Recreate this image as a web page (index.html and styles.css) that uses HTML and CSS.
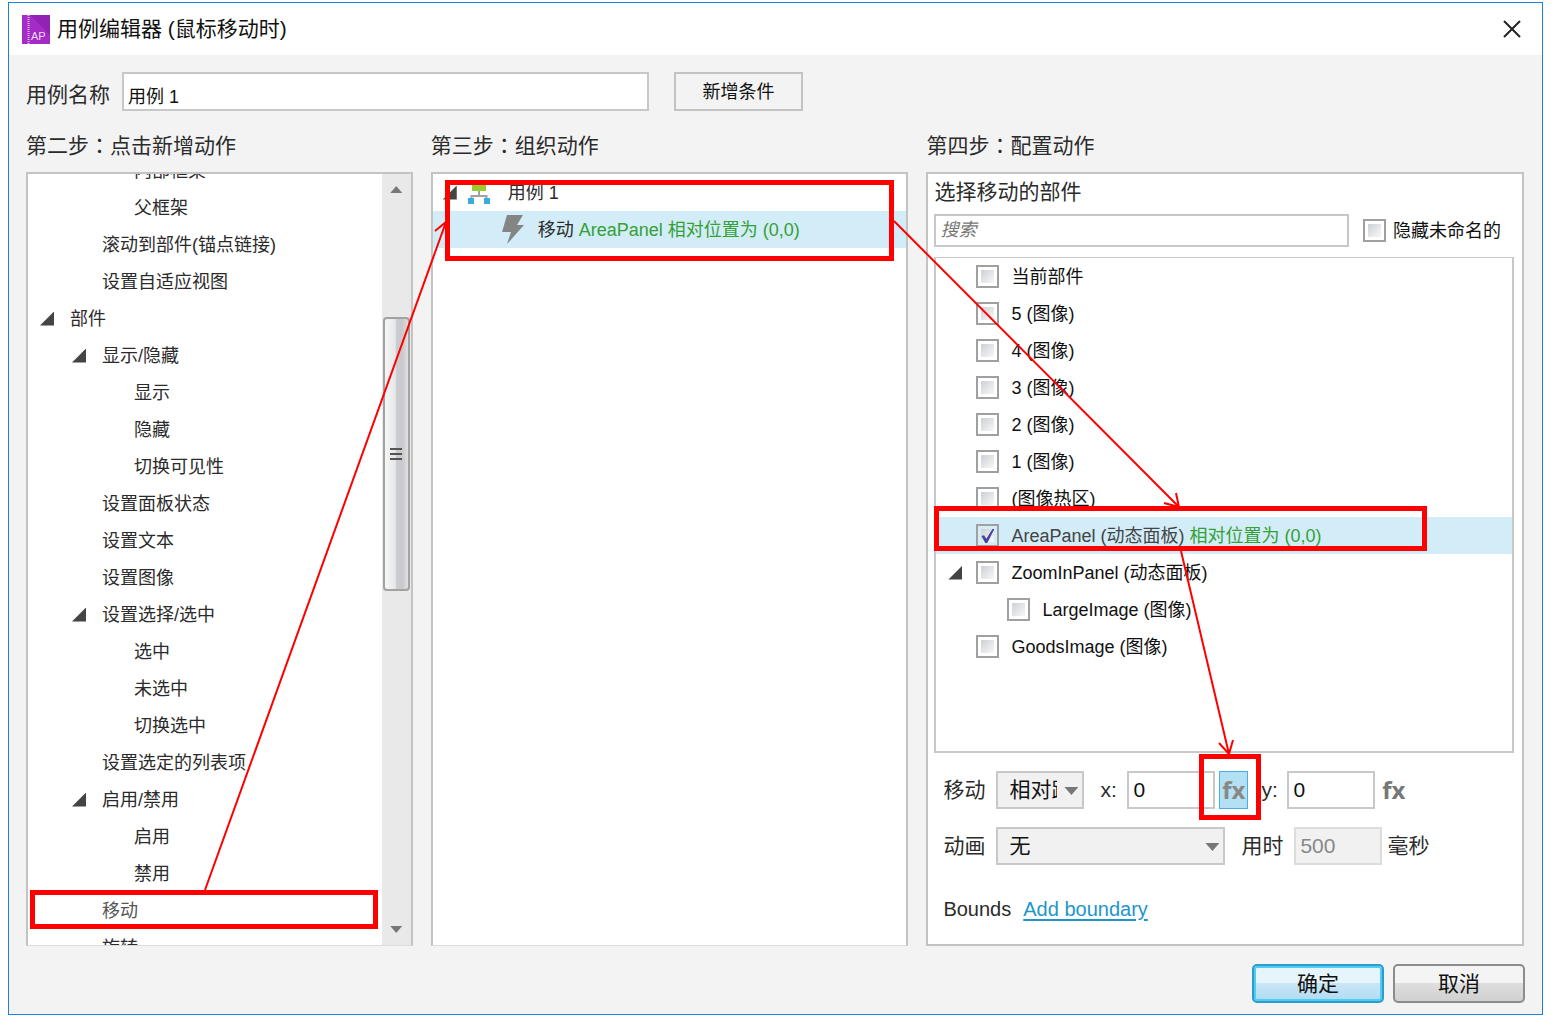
FILE: index.html
```html
<!DOCTYPE html>
<html lang="zh-CN">
<head>
  <meta charset="UTF-8">
  <meta name="viewport" content="width=device-width, initial-scale=1.0">
  <title>用例编辑器</title>
  <link rel="stylesheet" href="styles.css">
</head>
<body>
  <div class="dialog">
    <header class="titlebar">
      <svg class="logo" viewBox="0 0 28 29" aria-hidden="true">
        <rect width="28" height="29" fill="#a42bc6"/>
        <path d="M8 0h20v20z" fill="#9222b4"/>
        <path d="M6.500 0v29" stroke="#e3b5ee" stroke-width="2" stroke-dasharray="1 1"/>
        <text x="9" y="25" font-size="11" fill="#f3dcf8">AP</text>
      </svg>
      <h1>用例编辑器 (鼠标移动时)</h1>
      <button class="close" aria-label="关闭">
        <svg viewBox="0 0 18 18"><path d="M1 1L17 17M17 1L1 17" stroke="#222" stroke-width="2"/></svg>
      </button>
    </header>

    <div class="name-row">
      <label for="caseName">用例名称</label>
      <input type="text" id="caseName" value="用例 1">
      <button class="add-condition">新增条件</button>
    </div>

    <main class="columns">
      <section class="column">
        <h2>第二步<span class="colon" lang="zh-TW">：</span>点击新增动作</h2>
        <div class="panel actions">
          <ul class="tree scrolled">
            <li class="level3">内部框架</li>
            <li class="level3">父框架</li>
            <li class="level2">滚动到部件(锚点链接)</li>
            <li class="level2">设置自适应视图</li>
            <li class="level1 branch"><span class="arrow"></span>部件</li>
            <li class="level2 branch"><span class="arrow"></span>显示/隐藏</li>
            <li class="level3">显示</li>
            <li class="level3">隐藏</li>
            <li class="level3">切换可见性</li>
            <li class="level2">设置面板状态</li>
            <li class="level2">设置文本</li>
            <li class="level2">设置图像</li>
            <li class="level2 branch"><span class="arrow"></span>设置选择/选中</li>
            <li class="level3">选中</li>
            <li class="level3">未选中</li>
            <li class="level3">切换选中</li>
            <li class="level2">设置选定的列表项</li>
            <li class="level2 branch"><span class="arrow"></span>启用/禁用</li>
            <li class="level3">启用</li>
            <li class="level3">禁用</li>
            <li class="level2 current">移动</li>
            <li class="level2">旋转</li>
          </ul>
          <div class="scrollbar">
            <span class="scroll-up"></span>
            <div class="track">
              <div class="thumb"><i></i><i></i><i></i></div>
            </div>
            <span class="scroll-down"></span>
          </div>
        </div>
      </section>

      <section class="column">
        <h2>第三步<span class="colon" lang="zh-TW">：</span>组织动作</h2>
        <div class="panel">
          <ul class="tree">
            <li class="case">
              <span class="arrow"></span>
              <svg class="case-icon" viewBox="0 0 22 24" aria-hidden="true">
                <path d="M4 2h14v8H4z" fill="#97cc2c"/>
                <path d="M11 10v5M3.500 19v-4h15v4" fill="none" stroke="#a0a0a0" stroke-width="2"/>
                <path d="M0 17h6v6H0zM16 17h6v6h-6z" fill="#3aabe0"/>
              </svg>
              用例 1
            </li>
            <li class="action selected">
              <svg class="bolt" viewBox="0 0 22 29" aria-hidden="true">
                <path d="M5 0h16l-6 10h7L5 29l4-12H0z" fill="#858585"/>
              </svg>
              <span>移动 <span class="green">AreaPanel 相对位置为 (0,0)</span></span>
            </li>
          </ul>
        </div>
      </section>

      <section class="column">
        <h2>第四步<span class="colon" lang="zh-TW">：</span>配置动作</h2>
        <div class="panel config">
          <h3>选择移动的部件</h3>
          <div class="search-row">
            <input type="text" class="search" placeholder="搜索" aria-label="搜索">
            <label><input type="checkbox">隐藏未命名的</label>
          </div>
          <ul class="tree widgets">
            <li><label><input type="checkbox">当前部件</label></li>
            <li><label><input type="checkbox">5 (图像)</label></li>
            <li><label><input type="checkbox">4 (图像)</label></li>
            <li><label><input type="checkbox">3 (图像)</label></li>
            <li><label><input type="checkbox">2 (图像)</label></li>
            <li><label><input type="checkbox">1 (图像)</label></li>
            <li><label><input type="checkbox">(图像热区)</label></li>
            <li class="selected"><label><input type="checkbox" checked><span>AreaPanel (动态面板) <span class="green">相对位置为 (0,0)</span></span></label></li>
            <li class="parent"><span class="arrow"></span><label><input type="checkbox">ZoomInPanel (动态面板)</label></li>
            <li class="child"><label><input type="checkbox">LargeImage (图像)</label></li>
            <li><label><input type="checkbox">GoodsImage (图像)</label></li>
          </ul>

          <div class="field-row">
            <label for="moveType">移动</label>
            <span class="select">
              <select id="moveType"><option>相对距离</option></select>
            </span>
            <label for="moveX" class="axis">x:</label>
            <input type="text" id="moveX" value="0">
            <button class="fx active">fx</button>
            <label for="moveY" class="axis-y">y:</label>
            <input type="text" id="moveY" value="0">
            <button class="fx">fx</button>
          </div>
          <div class="field-row">
            <label for="animation">动画</label>
            <span class="select wide">
              <select id="animation"><option>无</option></select>
            </span>
            <label for="duration" class="duration">用时</label>
            <input type="text" id="duration" value="500" disabled>
            <span class="unit">毫秒</span>
          </div>
          <div class="bounds">
            <span>Bounds</span>
            <a href="#">Add boundary</a>
          </div>
        </div>
      </section>
    </main>

    <footer class="buttons">
      <button class="primary">确定</button>
      <button>取消</button>
    </footer>

    <!-- red boxes and arrows that show the order of the steps -->
    <svg class="guide" viewBox="8 2 1535 1013" preserveAspectRatio="none" aria-hidden="true">
      <g class="boxes">
        <rect x="32.500" y="892.500" width="343" height="34"/>
        <rect x="447.500" y="182.500" width="444" height="76"/>
        <rect x="936.500" y="508.500" width="488" height="40"/>
        <rect x="1201.500" y="756.500" width="57" height="61"/>
      </g>
      <g class="lines">
        <path d="M205 890L446 222M435 231L446 222L448 236"/>
        <path d="M894 221L1179 507M1164 503L1179 507L1176 493"/>
        <path d="M1181 551L1229 754M1219 743L1229 754L1233 740"/>
      </g>
    </svg>
  </div>
</body>
</html>
```
FILE: styles.css
```css
* {
  box-sizing: border-box;
}

body {
  margin: 0;
  padding: 2px 21px 13px 8px;
  background-color: #fff;
  color: #2b2b2b;
  font-family: "Liberation Sans", "Noto Sans CJK SC", sans-serif;
  font-size: 18px;
  line-height: 24px;
}

input,
select,
button {
  font: inherit;
  color: #111;
  border-radius: 0;
}

h1,
h2,
h3 {
  margin: 0;
  font-size: 21px;
  font-weight: normal;
}

.dialog {
  position: relative;
  display: flex;
  flex-direction: column;
  height: calc(100vh - 15px);
  min-height: 800px;
  border: 1px solid #1883d7;
  background-color: #f3f3f3;
}

.titlebar {
  display: flex;
  align-items: center;
  height: 52px;
  padding: 0 20px 0 13px;
  background-color: #fff;
}

.titlebar h1 {
  flex: 1;
  color: #111;
}

.logo {
  width: 28px;
  height: 29px;
  margin-right: 7px;
}

.close {
  width: 20px;
  height: 20px;
  padding: 1px;
  border: none;
  background: none;
}

.close svg {
  display: block;
}

.name-row {
  display: flex;
  align-items: center;
  padding: 17px 17px 0;
}

.name-row label {
  width: 96px;
  padding-top: 6px;
  font-size: 21px;
}

.name-row input {
  width: 527px;
  height: 39px;
  padding: 6px 4px 0;
}

.add-condition {
  width: 129px;
  height: 39px;
  margin-left: 25px;
  border: 2px solid #c3c3c3;
  background-color: #f3f3f3;
}

input[type="text"] {
  border: 2px solid #c8c8c8;
  background-color: #fff;
}

.columns {
  flex: 1;
  min-height: 0;
  display: grid;
  grid-template-columns: 387fr 478fr 598fr;
  gap: 18px;
  padding: 20px 18px 0 17px;
}

.column {
  display: flex;
  flex-direction: column;
  min-width: 0;
  min-height: 0;
}

.column h2 {
  margin-bottom: 11px;
  line-height: 30px;
}

.colon {
  font-family: "Noto Sans CJK TC", sans-serif;
  line-height: 24px;
}

.panel {
  flex: 1;
  min-height: 0;
  border: 2px solid #c3c3c3;
  border-bottom: 1px solid #dcdcdc;
  background-color: #fff;
  overflow: hidden;
}

.tree {
  margin: 0;
  padding: 0;
  list-style: none;
}

.tree li {
  display: flex;
  align-items: center;
  height: 37px;
  white-space: nowrap;
}

.tree .selected {
  background-color: #d2edf8;
}

.green {
  color: #35a035;
}

.arrow {
  flex: none;
  width: 14px;
  height: 14px;
  background-color: #444;
  clip-path: polygon(100% 0, 100% 100%, 0 100%);
}

/* left column */

.actions {
  display: flex;
}

.actions .tree {
  flex: 1;
}

.scrolled {
  margin-top: -22px;
}

.level2 {
  padding-left: 74px;
}

.level3 {
  padding-left: 106px;
}

.level1.branch {
  padding-left: 12px;
}

.level2.branch {
  padding-left: 44px;
}

.branch .arrow {
  margin-right: 16px;
}

.tree .current {
  color: #555;
}

.scrollbar {
  display: flex;
  flex-direction: column;
  align-items: center;
  width: 29px;
  padding: 12px 0;
  background-color: #e9e9e9;
}

.scroll-up,
.scroll-down {
  width: 12px;
  height: 7px;
  background-color: #777;
}

.scroll-up {
  clip-path: polygon(50% 0, 100% 100%, 0 100%);
}

.scroll-down {
  clip-path: polygon(0 0, 100% 0, 50% 100%);
}

.track {
  flex: 1;
  display: flex;
  flex-direction: column;
  width: 27px;
}

.track::before {
  content: "";
  flex: 124;
}

.track::after {
  content: "";
  flex: 336;
}

.thumb {
  flex: 271;
  display: flex;
  flex-direction: column;
  align-items: center;
  justify-content: center;
  gap: 3px;
  border: 2px solid #a2a2a2;
  border-radius: 4px;
  background: linear-gradient(to right, #f6f6f6 0, #e6e7e8 45%, #cccdd0 50%, #c8c9cc 75%, #e0e0e0 100%);
}

.thumb i {
  width: 12px;
  height: 2px;
  background-color: #555;
}

/* middle column */

.case {
  padding-left: 10px;
}

.case-icon {
  width: 22px;
  height: 24px;
  margin: 0 18px 0 11px;
}

.action {
  padding-left: 69px;
}

.bolt {
  width: 22px;
  height: 29px;
  margin-right: 14px;
}

/* right column */

.config {
  display: flex;
  flex-direction: column;
  padding: 0 8px 20px 6px;
  border-bottom: 2px solid #c3c3c3;
}

.config h3 {
  height: 40px;
  line-height: 36px;
}

.search-row {
  display: flex;
  align-items: center;
  height: 33px;
  margin-bottom: 10px;
}

.search-row .search {
  flex: 1;
  min-width: 0;
  height: 33px;
  margin-right: 14px;
  padding: 0 4px;
}

.search::placeholder {
  color: #777;
  font-style: italic;
}

.search-row label {
  display: flex;
  align-items: center;
  gap: 7px;
  padding-right: 13px;
  color: #111;
}

input[type="checkbox"] {
  flex: none;
  appearance: none;
  width: 23px;
  height: 23px;
  margin: 0;
  padding: 3px;
  border: 2px solid #a0a0a0;
  background: linear-gradient(135deg, #ccd0d6, #f8f8f8) content-box #f1f1f1;
}

input[type="checkbox"]:checked::before {
  content: "";
  display: block;
  width: 13px;
  height: 14px;
  background-color: #4644a0;
  clip-path: polygon(0 50%, 20% 45%, 38% 70%, 85% 0, 100% 0, 45% 100%, 30% 100%);
}

.widgets {
  flex: 1;
  min-height: 0;
  border: 2px solid #c8c8c8;
  border-top-width: 1px;
  overflow: hidden;
}

.widgets li {
  padding-left: 40px;
}

.widgets label {
  display: flex;
  align-items: center;
  gap: 12px;
  color: #111;
}

.widgets .selected label {
  color: #444;
}

.widgets .selected .green {
  color: #35a035;
}

.widgets .parent {
  padding-left: 12px;
}

.parent .arrow {
  margin-right: 14px;
}

.widgets .child {
  padding-left: 71px;
}

.field-row {
  display: flex;
  align-items: center;
  margin: 18px 0 0 9px;
  font-size: 21px;
}

.field-row input {
  width: 88px;
  height: 38px;
  padding: 0 4px;
}

.field-row input:disabled {
  margin-right: 5px;
  border-color: #dcdcdc;
  background-color: #f1f1f1;
  color: #888;
}

.select {
  position: relative;
  width: 88px;
  margin-left: 11px;
}

.select.wide {
  width: 229px;
}

.select select {
  display: block;
  appearance: none;
  width: 100%;
  height: 38px;
  padding: 0 25px 0 11px;
  border: 2px solid #c8c8c8;
  background-color: #f1f1f1;
}

.select::after {
  content: "";
  position: absolute;
  top: 16px;
  right: 6px;
  width: 14px;
  height: 8px;
  background-color: #777;
  clip-path: polygon(0 0, 100% 0, 50% 100%);
}

.axis {
  width: 27px;
  margin-left: 16px;
}

.axis-y {
  width: 26px;
  margin-left: 13px;
}

.duration {
  width: 53px;
  margin-left: 16px;
}

.fx {
  width: 29px;
  height: 38px;
  margin-left: 4px;
  padding: 0;
  border: 1px solid transparent;
  background: none;
  color: #777;
  font-family: "Noto Sans", sans-serif;
  font-size: 24px;
  font-weight: bold;
  line-height: 34px;
}

.fx.active {
  border-color: #4aaede;
  background-color: #b4e0f4;
  color: #888;
}

.bounds {
  display: flex;
  gap: 12px;
  margin: 29px 0 0 9px;
  font-size: 20px;
  line-height: 30px;
}

.bounds a {
  color: #1e96cc;
  text-underline-offset: 3px;
}

.buttons {
  display: flex;
  justify-content: flex-end;
  gap: 9px;
  padding: 18px 17px 11px;
}

.buttons button {
  width: 132px;
  height: 39px;
  border: 2px solid #8c8c8c;
  border-radius: 5px;
  background: linear-gradient(#f4f4f4 50%, #dedede 50%, #d0d0d0);
  font-size: 21px;
  line-height: 30px;
}

.buttons .primary {
  border-color: #2c9ccc;
  background: linear-gradient(#e6f4fc 50%, #c9e6f6 50%, #b0dbf2);
  box-shadow: inset 0 0 0 2px #50cdf5;
}

.guide {
  position: absolute;
  top: -1px;
  left: -1px;
  width: calc(100% + 2px);
  height: calc(100% + 2px);
  fill: none;
  stroke: #fe0000;
  pointer-events: none;
}

.boxes {
  stroke-width: 5px;
}

.lines {
  stroke-width: 2px;
}
```
